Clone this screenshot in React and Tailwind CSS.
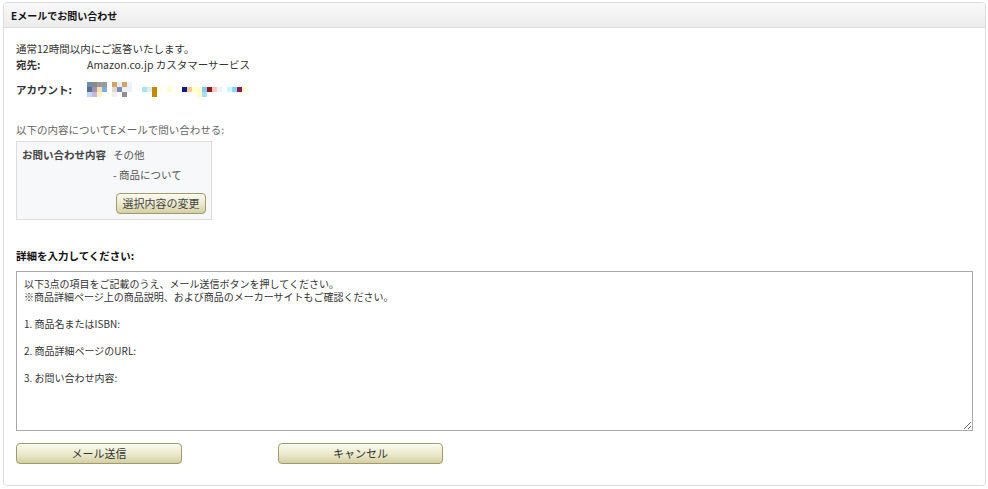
import React from 'react';

const FONT = { fontFamily: '"Noto Sans CJK JP", "Noto Sans", sans-serif' };

// mosaic of the masked account name: [row, col, colour]
const PIXELS = [
  [0, 0, 'bg-[#6b8fb3]'], [0, 1, 'bg-[#8a8a8a]'], [0, 2, 'bg-[#9a9a9a]'], [0, 3, 'bg-[#9a9a9a]'],
  [0, 5, 'bg-[#d4a36a]'], [0, 6, 'bg-[#e8eef5]'], [0, 7, 'bg-[#d4a36a]'], [0, 8, 'bg-[#eef0f8]'],
  [1, 0, 'bg-[#5c6f8c]'], [1, 1, 'bg-[#a58fb0]'], [1, 2, 'bg-[#f5deb3]'], [1, 3, 'bg-[#7aaee0]'],
  [1, 5, 'bg-[#e8d8c8]'], [1, 6, 'bg-[#7a8cc0]'], [1, 7, 'bg-[#f0f0f8]'], [1, 8, 'bg-[#f0f0f8]'],
  [1, 11, 'bg-[#a8e0f8]'], [1, 12, 'bg-[#d8f0f8]'], [1, 13, 'bg-[#c8860a]'], [1, 14, 'bg-[#fffce8]'],
  [1, 16, 'bg-[#ffffc8]'], [1, 19, 'bg-[#101890]'], [1, 20, 'bg-[#ffc890]'], [1, 21, 'bg-[#ffffc8]'],
  [1, 22, 'bg-[#ffffc8]'], [1, 23, 'bg-[#88c8f8]'], [1, 24, 'bg-[#901818]'], [1, 25, 'bg-[#ffc8c8]'],
  [1, 26, 'bg-[#e8f8f8]'], [1, 28, 'bg-[#c8f8f8]'], [1, 29, 'bg-[#88d8f8]'], [1, 30, 'bg-[#901858]'],
  [1, 31, 'bg-[#ffffc8]'],
  [2, 0, 'bg-[#c0d8f8]'], [2, 1, 'bg-[#c8b8d8]'], [2, 2, 'bg-[#fff0c8]'], [2, 5, 'bg-[#f0f0f0]'],
  [2, 7, 'bg-[#909090]'], [2, 13, 'bg-[#c8860a]'], [2, 22, 'bg-[#ffffc8]'], [2, 23, 'bg-[#a8e0f8]'],
];

function Mosaic() {
  const cells = [];
  for (let r = 0; r < 3; r++) {
    for (let c = 0; c < 32; c++) {
      const hit = PIXELS.find(p => p[0] === r && p[1] === c);
      cells.push(<div key={`${r}-${c}`} className={`h-[5px] w-[5px] ${hit ? hit[2] : ''}`} />);
    }
  }
  return <div className="grid grid-cols-[repeat(32,5px)]">{cells}</div>;
}

function BeigeButton({ children, className = '' }) {
  return (
    <button
      className={`rounded-[4px] border border-[#a09a6c] bg-gradient-to-b from-[#fafaec] via-[#ecebcf] to-[#d4d0a2] text-[11px] text-[#333] shadow-[inset_0_1px_0_#fff] ${className}`}
    >
      {children}
    </button>
  );
}

const BODY = `以下3点の項目をご記載のうえ、メール送信ボタンを押してください。
※商品詳細ページ上の商品説明、および商品のメーカーサイトもご確認ください。

1. 商品名またはISBN:

2. 商品詳細ページのURL:

3. お問い合わせ内容:`;

export default function App() {
  return (
    <div className="min-h-screen bg-white pl-[3px] pr-[3px] pt-[2px]" style={FONT}>
      <div className="w-[983px] overflow-hidden rounded-[4px] border border-[#dddddd] bg-white">
        <div className="flex h-[25px] items-center border-b border-[#dddddd] bg-gradient-to-b from-[#f9f9f9] to-[#ececec] px-[7px] text-[10px] font-bold text-[#111]">
          Eメールでお問い合わせ
        </div>

        <div className="px-[12px] pb-[21px] pt-[13px] text-[10.5px] text-[#333]">
          <div className="leading-[16px]">通常12時間以内にご返答いたします。</div>
          <div className="flex leading-[16px]">
            <span className="w-[71px] font-bold">宛先:</span>
            <span>Amazon.co.jp カスタマーサービス</span>
          </div>
          <div className="mt-[9px] flex items-center">
            <span className="w-[71px] font-bold">アカウント:</span>
            <Mosaic />
          </div>

          <div className="mt-[24px] leading-[16px] text-[#666]">以下の内容についてEメールで問い合わせる:</div>
          <div className="mt-[3px] w-[196px] border border-[#dddddd] bg-[#f7f8fa] px-[5px] pb-[5px] pt-[5px]">
            <div className="flex leading-[16px]">
              <span className="w-[91px] font-bold text-[#444]">お問い合わせ内容</span>
              <div className="text-[#555]">
                <div>その他</div>
                <div className="mt-[4px]">- 商品について</div>
              </div>
            </div>
            <div className="mt-[10px] flex pl-[94px]">
              <BeigeButton className="h-[21px] w-[90px] text-[#444]">選択内容の変更</BeigeButton>
            </div>
          </div>

          <div className="mt-[28px] font-bold leading-[16px] text-[#111]">詳細を入力してください:</div>
          <textarea
            defaultValue={BODY}
            className="mt-[7px] block h-[160px] w-[957px] resize border border-[#aaaaaa] px-[7px] py-[5px] text-[10px] leading-[13.5px] text-[#333] outline-none"
            style={FONT}
          />

          <div className="mt-[12px] flex gap-[96px]">
            <BeigeButton className="h-[21px] w-[166px]">メール送信</BeigeButton>
            <BeigeButton className="h-[21px] w-[165px]">キャンセル</BeigeButton>
          </div>
        </div>
      </div>
    </div>
  );
}
